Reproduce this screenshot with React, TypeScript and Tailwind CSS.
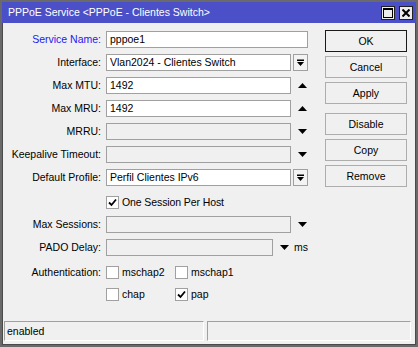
import React from "react";

const font = { fontFamily: '"Liberation Sans", Arial, sans-serif' };

function Up() {
  return (
    <svg width="9" height="5" viewBox="0 0 9 5" className="block">
      <polygon points="0,5 9,5 4.5,0" fill="#000" />
    </svg>
  );
}
function Down() {
  return (
    <svg width="9" height="5" viewBox="0 0 9 5" className="block">
      <polygon points="0,0 9,0 4.5,5" fill="#000" />
    </svg>
  );
}
function DropBtn() {
  return (
    <div className="w-[15px] h-[17px] border border-[#a0a0a0] bg-[#f3f3f3] flex items-center justify-center ml-[2px]">
      <svg width="9" height="8" viewBox="0 0 9 8" className="block">
        <rect x="1" y="0.5" width="7" height="1.5" fill="#000" />
        <polygon points="1,3 8,3 4.5,7" fill="#000" />
      </svg>
    </div>
  );
}

function Label({ children, blue }: { children: React.ReactNode; blue?: boolean }) {
  return (
    <div className={`w-[98px] text-right text-[10.5px] leading-none ${blue ? "text-[#2020f0]" : "text-black"}`}>
      {children}
    </div>
  );
}

function Input({ value, w, disabled }: { value?: string; w: string; disabled?: boolean }) {
  return (
    <div
      className={`${w} h-[17px] border border-[#a0a0a0] ${disabled ? "bg-[#f0f0f0]" : "bg-white"} flex items-center pl-[3px] text-[10.5px] text-black leading-none`}
    >
      {value}
    </div>
  );
}

function Row({ label, blue, children, cls }: { label: string; blue?: boolean; children: React.ReactNode; cls: string }) {
  return (
    <div className={`flex items-center h-[17px] ${cls}`}>
      <Label blue={blue}>{label}</Label>
      <div className="ml-[5px] flex items-center">{children}</div>
    </div>
  );
}

function Check({ checked }: { checked?: boolean }) {
  return (
    <div className="w-[13px] h-[13px] border border-[#a0a0a0] bg-white flex items-center justify-center">
      {checked && (
        <svg width="9" height="9" viewBox="0 0 9 9" className="block">
          <polyline points="1,4.5 3.5,7 8,1.5" fill="none" stroke="#000" strokeWidth="1.8" />
        </svg>
      )}
    </div>
  );
}

function Btn({ children, def, cls }: { children: React.ReactNode; def?: boolean; cls?: string }) {
  return (
    <div
      className={`w-[82px] h-[22px] border ${def ? "border-[#1a1a1a]" : "border-[#adadad]"} bg-[#f0f0f0] flex items-center justify-center text-[10.5px] text-black leading-none ${cls ?? ""}`}
    >
      {children}
    </div>
  );
}

function Arrow({ up }: { up?: boolean }) {
  return <div className="ml-[7px] w-[9px]">{up ? <Up /> : <Down />}</div>;
}

export default function App() {
  return (
    <div style={font} className="w-[418px] h-[347px] bg-[#4a4a4a] border-[2px] border-[#6a6a6a] flex flex-col select-none">
      <div className="h-[21px] bg-[#4c50c8] flex items-center pl-[6px] pr-[3px] shrink-0">
        <div className="text-white text-[10.5px] leading-none flex-1">PPPoE Service &lt;PPPoE - Clientes Switch&gt;</div>
        <div className="flex gap-[4px]">
          <div className="w-[14px] h-[14px] bg-[#ececec] border border-[#202020] flex items-center justify-center">
            <svg width="10" height="10" viewBox="0 0 10 10" className="block">
              <rect x="0.5" y="0.5" width="9" height="9" fill="none" stroke="#000" strokeWidth="1" />
              <rect x="0" y="0" width="10" height="2" fill="#000" />
            </svg>
          </div>
          <div className="w-[14px] h-[14px] bg-[#ececec] border border-[#202020] flex items-center justify-center">
            <svg width="8" height="8" viewBox="0 0 8 8" className="block">
              <path d="M0.5 0.5 L7.5 7.5 M7.5 0.5 L0.5 7.5" stroke="#000" strokeWidth="2" />
            </svg>
          </div>
        </div>
      </div>
      <div className="flex-1 bg-[#f0f0f0] flex flex-col ml-[1px] mr-[1px] mb-[1px]">
        <div className="flex flex-1">
          <div className="flex flex-col pt-[8px] w-[318px]">
            <Row label="Service Name:" blue cls="">
              <Input value="pppoe1" w="w-[202px]" />
            </Row>
            <Row label="Interface:" cls="mt-[6px]">
              <Input value="Vlan2024 - Clientes Switch" w="w-[185px]" />
              <DropBtn />
            </Row>
            <Row label="Max MTU:" cls="mt-[6px]">
              <Input value="1492" w="w-[185px]" />
              <Arrow up />
            </Row>
            <Row label="Max MRU:" cls="mt-[6px]">
              <Input value="1492" w="w-[185px]" />
              <Arrow up />
            </Row>
            <Row label="MRRU:" cls="mt-[6px]">
              <Input disabled w="w-[185px]" />
              <Arrow />
            </Row>
            <Row label="Keepalive Timeout:" cls="mt-[6px]">
              <Input disabled w="w-[185px]" />
              <Arrow />
            </Row>
            <Row label="Default Profile:" cls="mt-[6px]">
              <Input value="Perfil Clientes IPv6" w="w-[185px]" />
              <DropBtn />
            </Row>
            <div className="flex items-center h-[21px] mt-[6px] pl-[103px]">
              <Check checked />
              <span className="ml-[3px] text-[10.5px] tracking-[-0.1px] leading-none">One Session Per Host</span>
            </div>
            <Row label="Max Sessions:" cls="mt-[3px]">
              <Input disabled w="w-[185px]" />
              <Arrow />
            </Row>
            <Row label="PADO Delay:" cls="mt-[6px]">
              <Input disabled w="w-[167px]" />
              <Arrow />
              <span className="ml-[5px] text-[10.5px] leading-none">ms</span>
            </Row>
            <div className="flex items-center h-[21px] mt-[6px]">
              <Label>Authentication:</Label>
              <div className="ml-[5px] flex items-center">
                <div className="w-[69px] flex items-center">
                  <Check />
                  <span className="ml-[3px] text-[10.5px] leading-none">mschap2</span>
                </div>
                <Check />
                <span className="ml-[3px] text-[10.5px] leading-none">mschap1</span>
              </div>
            </div>
            <div className="flex items-center h-[21px] mt-[1px] pl-[103px]">
              <div className="w-[69px] flex items-center">
                <Check />
                <span className="ml-[3px] text-[10.5px] leading-none">chap</span>
              </div>
              <Check checked />
              <span className="ml-[3px] text-[10.5px] leading-none">pap</span>
            </div>
          </div>
          <div className="flex flex-col pt-[7px] ml-[4px]">
            <Btn def>OK</Btn>
            <Btn cls="mt-[4px]">Cancel</Btn>
            <Btn cls="mt-[4px]">Apply</Btn>
            <Btn cls="mt-[9px]">Disable</Btn>
            <Btn cls="mt-[4px]">Copy</Btn>
            <Btn cls="mt-[4px]">Remove</Btn>
          </div>
        </div>
        <div className="h-[26px] flex items-start pt-[3px] pl-[1px] pr-[4px] gap-[3px]">
          <div className="w-[200px] h-[20px] border border-t-[#a0a0a0] border-l-[#a0a0a0] border-b-white border-r-white flex items-center pl-[2px] text-[10.5px] leading-none">
            enabled
          </div>
          <div className="flex-1 h-[20px] border border-t-[#a0a0a0] border-l-[#a0a0a0] border-b-white border-r-white" />
        </div>
      </div>
    </div>
  );
}
